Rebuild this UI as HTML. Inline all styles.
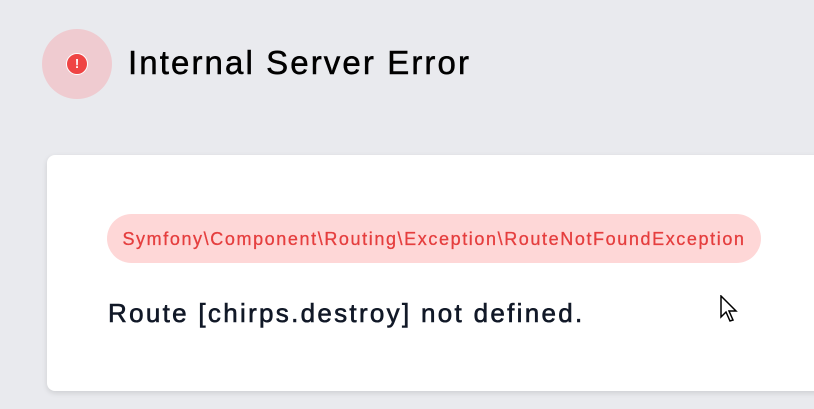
<!DOCTYPE html>
<html><head><style>
html,body{margin:0;padding:0;width:814px;height:409px;overflow:hidden;background:#e9eaee;font-family:"Liberation Sans",sans-serif;}
.ic{position:absolute;left:42px;top:29px;width:70px;height:70px;border-radius:50%;background:#efcbd0;}
.ic .d{position:absolute;left:24px;top:24px;width:22px;height:22px;border-radius:50%;background:#ef4444;box-sizing:border-box;border:1.5px solid #fff;color:#fff;font-weight:bold;font-size:13px;line-height:19px;text-align:center;}
h1{position:absolute;left:128px;top:44px;margin:0;font-size:33px;font-weight:normal;color:#000;letter-spacing:2.1px;-webkit-text-stroke:0.5px #000;white-space:nowrap;}
.card{position:absolute;left:47px;top:155px;width:800px;height:236px;background:#fff;border-radius:8px;box-shadow:0 2px 6px rgba(0,0,0,.12);}
.pill{position:absolute;left:60px;top:59px;width:654px;height:49px;border-radius:25px;background:#fed7d7;color:#e53e3e;font-size:18px;letter-spacing:1.6px;line-height:50px;text-align:center;white-space:nowrap;-webkit-text-stroke:0.3px #e53e3e;}
.msg{position:absolute;left:61px;top:143px;font-size:26px;letter-spacing:2.3px;color:#111827;white-space:nowrap;-webkit-text-stroke:0.6px #111827;}
.cur{position:absolute;left:720px;top:295px;}
</style></head><body>
<div class="ic"><div class="d">!</div></div>
<h1>Internal Server Error</h1>
<div class="card">
<div class="pill">Symfony\Component\Routing\Exception\RouteNotFoundException</div>
<div class="msg">Route [chirps.destroy] not defined.</div>
</div>
<svg class="cur" width="22" height="32" viewBox="0 0 22 32"><path d="M1 1 L1 22 L6 17 L10 26 L13 25 L9 16 L16 16 Z" fill="#fff" stroke="#000" stroke-width="1.5" stroke-linejoin="miter"/></svg>
</body></html>
